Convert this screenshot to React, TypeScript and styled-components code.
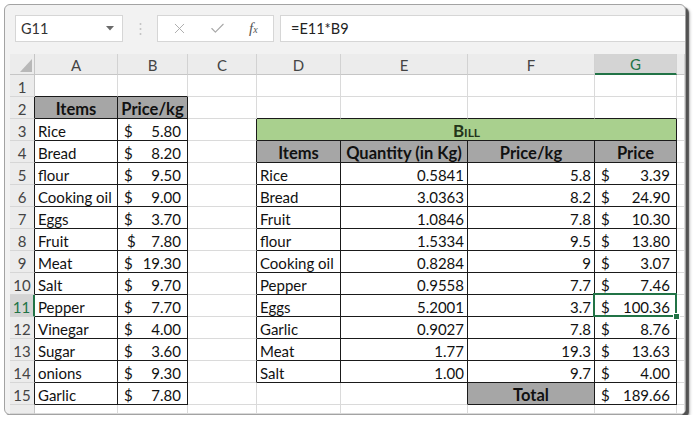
import React from 'react';
import styled, { createGlobalStyle } from 'styled-components';
import { X, Check } from 'lucide-react';

const Global = createGlobalStyle`
  html, body { margin: 0; padding: 0; background: #ffffff; }
  body { font-family: Lato, "Liberation Sans", sans-serif; }
`;

const Frame = styled.div`
  margin: 4px 0 0 4px;
  width: 682px;
  height: 411px;
  box-sizing: border-box;
  border: 1px solid #a3a3a3;
  border-radius: 6px;
  background: #f2f2f2;
  box-shadow: 3px 3px 1px rgba(70, 70, 70, 0.9), 4px 4px 3px rgba(0, 0, 0, 0.25);
  overflow: hidden;
  display: flex;
  flex-direction: column;
  padding: 10px 0 0 5px;
`;

const FormulaBar = styled.div`
  display: flex;
  align-items: stretch;
  height: 27px;
  margin-left: 5px;
  margin-bottom: 12px;
`;

const NameBox = styled.div`
  width: 108px;
  box-sizing: border-box;
  background: #fff;
  border: 1px solid #d6d6d6;
  display: flex;
  align-items: center;
  justify-content: space-between;
  padding: 0 8px 0 5px;
  font-size: 14.5px;
  color: #333;
`;

const Separator = styled.div`
  width: 34px;
  display: flex;
  align-items: center;
  justify-content: center;
`;

const FnBox = styled.div`
  width: 117px;
  box-sizing: border-box;
  background: #fff;
  border: 1px solid #d6d6d6;
  display: flex;
  align-items: center;
  padding: 0 0 0 13px;
  gap: 21px;
  color: #a8a8a8;
`;

const Fx = styled.span`
  font-family: "Liberation Serif", serif;
  font-style: italic;
  font-size: 15px;
  color: #555;
  margin-left: 2px;
  sub { font-size: 10px; vertical-align: 0; }
`;

const FormulaInput = styled.div`
  flex: 1;
  margin-left: 6px;
  box-sizing: border-box;
  background: #fff;
  border: 1px solid #d6d6d6;
  border-right: none;
  display: flex;
  align-items: center;
  padding-left: 10px;
  font-size: 14.5px;
  color: #222;
`;

const Sheet = styled.div`
  flex: 1;
  display: grid;
  grid-template-columns: 25px 83px 70px 69px 84px 127px 127px 82px 1fr;
  grid-template-rows: 21px repeat(15, 22px) 1fr;
  background: #fff;
`;

const Corner = styled.div`
  background: #ececec;
  border-right: 1px solid #c6c6c6;
  border-bottom: 1px solid #c6c6c6;
  box-sizing: border-box;
  display: flex;
  align-items: flex-end;
  justify-content: flex-end;
  padding: 0 2px 2px 0;
`;

const ColHeader = styled.div<{ $active?: boolean }>`
  box-sizing: border-box;
  background: ${(p) => (p.$active ? '#d4d4d4' : '#ececec')};
  border-right: 1px solid #d2d2d2;
  border-bottom: ${(p) => (p.$active ? '2px solid #217346' : '1px solid #c6c6c6')};
  color: ${(p) => (p.$active ? '#217346' : '#444')};
  font-size: 15px;
  display: flex;
  align-items: center;
  justify-content: center;
  padding-top: 1px;
`;

const RowHeader = styled.div<{ $active?: boolean; $rb?: boolean }>`
  box-sizing: border-box;
  background: ${(p) => (p.$active ? '#d4d4d4' : '#ececec')};
  border-right: ${(p) =>
    p.$active ? '2px solid #217346' : p.$rb ? '1px solid #1a1a1a' : '1px solid #c6c6c6'};
  border-bottom: 1px solid #d6d6d6;
  color: ${(p) => (p.$active ? '#217346' : '#444')};
  font-size: 15px;
  display: flex;
  align-items: flex-end;
  justify-content: center;
  line-height: 18px;
`;

type Align = 'left' | 'right' | 'center' | 'split';

const Cell = styled.div<{
  $rb: boolean;
  $bb: boolean;
  $bg?: string;
  $align: Align;
  $bold?: boolean;
  $span?: number;
  $selected?: boolean;
  $title?: boolean;
  $pl?: number;
}>`
  box-sizing: border-box;
  position: relative;
  grid-column: span ${(p) => p.$span ?? 1};
  border-right: 1px solid ${(p) => (p.$rb ? '#1a1a1a' : '#dadada')};
  border-bottom: 1px solid ${(p) => (p.$bb ? '#1a1a1a' : '#dadada')};
  background: ${(p) => p.$bg ?? '#fff'};
  display: flex;
  align-items: flex-end;
  justify-content: ${(p) =>
    p.$align === 'left'
      ? 'flex-start'
      : p.$align === 'right'
      ? 'flex-end'
      : p.$align === 'center'
      ? 'center'
      : 'space-between'};
  padding: 0 ${(p) => (p.$align === 'split' ? 6 : 3)}px 0 ${(p) => p.$pl ?? (p.$align === 'split' ? 6 : 3)}px;
  font-size: ${(p) => (p.$title ? 17 : p.$bold ? 16.5 : 15)}px;
  font-weight: ${(p) => (p.$bold ? 700 : 400)};
  font-variant: ${(p) => (p.$title ? 'small-caps' : 'normal')};
  color: ${(p) => (p.$title ? '#24351a' : '#111')};
  line-height: 18px;
  white-space: nowrap;
  overflow: visible;
  z-index: ${(p) => (p.$selected ? 2 : 'auto')};
  &::after {
    content: ${(p) => (p.$selected ? "''" : 'none')};
    position: absolute;
    left: -2px;
    top: -2px;
    right: -1px;
    bottom: -1px;
    border: 2px solid #217346;
  }
  &::before {
    content: ${(p) => (p.$selected ? "''" : 'none')};
    position: absolute;
    right: -4px;
    bottom: -4px;
    width: 5px;
    height: 5px;
    background: #217346;
    border: 1px solid #fff;
    z-index: 3;
  }
`;

type Kind = 'text' | 'num' | 'acct' | 'hdr' | 'title';
interface CellData {
  kind: Kind;
  text: string;
  span?: number;
  pl?: number;
}

const GRAY = '#a6a6a6';
const GREEN = '#a9d08e';

const sheet: Record<string, CellData> = {};
const put = (r: number, c: number, d: CellData) => {
  sheet[`${r}:${c}`] = d;
};

put(2, 0, { kind: 'hdr', text: 'Items' });
put(2, 1, { kind: 'hdr', text: 'Price/kg' });
const leftItems: [string, string][] = [
  ['Rice', '5.80'],
  ['Bread', '8.20'],
  ['flour', '9.50'],
  ['Cooking oil', '9.00'],
  ['Eggs', '3.70'],
  ['Fruit', '7.80'],
  ['Meat', '19.30'],
  ['Salt', '9.70'],
  ['Pepper', '7.70'],
  ['Vinegar', '4.00'],
  ['Sugar', '3.60'],
  ['onions', '9.30'],
  ['Garlic', '7.80'],
];
leftItems.forEach(([n, v], i) => {
  put(3 + i, 0, { kind: 'text', text: n });
  put(3 + i, 1, { kind: 'acct', text: v, pl: n === 'Fruit' ? 9 : undefined });
});

put(3, 3, { kind: 'title', text: 'Bill', span: 4 });
put(4, 3, { kind: 'hdr', text: 'Items' });
put(4, 4, { kind: 'hdr', text: 'Quantity (in Kg)' });
put(4, 5, { kind: 'hdr', text: 'Price/kg' });
put(4, 6, { kind: 'hdr', text: 'Price' });
const bill: [string, string, string, string][] = [
  ['Rice', '0.5841', '5.8', '3.39'],
  ['Bread', '3.0363', '8.2', '24.90'],
  ['Fruit', '1.0846', '7.8', '10.30'],
  ['flour', '1.5334', '9.5', '13.80'],
  ['Cooking oil', '0.8284', '9', '3.07'],
  ['Pepper', '0.9558', '7.7', '7.46'],
  ['Eggs', '5.2001', '3.7', '100.36'],
  ['Garlic', '0.9027', '7.8', '8.76'],
  ['Meat', '1.77', '19.3', '13.63'],
  ['Salt', '1.00', '9.7', '4.00'],
];
bill.forEach(([n, q, p, t], i) => {
  put(5 + i, 3, { kind: 'text', text: n });
  put(5 + i, 4, { kind: 'num', text: q });
  put(5 + i, 5, { kind: 'num', text: p });
  put(5 + i, 6, { kind: 'acct', text: t });
});
put(15, 5, { kind: 'hdr', text: 'Total' });
put(15, 6, { kind: 'acct', text: '189.66' });

const tables = [
  { r0: 2, r1: 15, c0: 0, c1: 1 },
  { r0: 3, r1: 14, c0: 3, c1: 6 },
  { r0: 15, r1: 15, c0: 5, c1: 6 },
];
const rightBlack = (r: number, c: number) =>
  tables.some((t) => r >= t.r0 && r <= t.r1 && ((c >= t.c0 && c <= t.c1) || c === t.c0 - 1));
const bottomBlack = (r: number, c: number) =>
  tables.some((t) => c >= t.c0 && c <= t.c1 && ((r >= t.r0 && r <= t.r1) || r === t.r0 - 1));

const COLS = ['A', 'B', 'C', 'D', 'E', 'F', 'G'];
const ACTIVE_ROW = 11;
const ACTIVE_COL = 6;

function renderCell(r: number, c: number) {
  const d = sheet[`${r}:${c}`];
  const span = d?.span ?? 1;
  const lastC = c + span - 1;
  const common = {
    key: `${r}-${c}`,
    $rb: rightBlack(r, lastC),
    $bb: bottomBlack(r, c),
    $span: span,
    $selected: r === ACTIVE_ROW && c === ACTIVE_COL,
  };
  if (!d) return <Cell {...common} $align="left" />;
  switch (d.kind) {
    case 'hdr':
      return (
        <Cell {...common} $align="center" $bold $bg={GRAY}>
          {d.text}
        </Cell>
      );
    case 'title':
      return (
        <Cell {...common} $align="center" $bold $title $bg={GREEN}>
          {d.text}
        </Cell>
      );
    case 'num':
      return (
        <Cell {...common} $align="right">
          {d.text}
        </Cell>
      );
    case 'acct':
      return (
        <Cell {...common} $align="split" $pl={d.pl}>
          <span>$</span>
          <span>{d.text}</span>
        </Cell>
      );
    default:
      return (
        <Cell {...common} $align="left">
          {d.text}
        </Cell>
      );
  }
}

function rows() {
  const out: React.ReactNode[] = [];
  for (let r = 1; r <= 16; r++) {
    out.push(
      <RowHeader key={`h${r}`} $active={r === ACTIVE_ROW} $rb={rightBlack(r, -1)}>
        {r <= 15 ? r : ''}
      </RowHeader>
    );
    for (let c = 0; c <= 7; c++) {
      const covered = Object.entries(sheet).some(([k, v]) => {
        const [rr, cc] = k.split(':').map(Number);
        return rr === r && v.span && c > cc && c < cc + v.span;
      });
      if (covered) continue;
      out.push(renderCell(r, c));
    }
  }
  return out;
}

export default function App() {
  return (
    <>
      <Global />
      <Frame>
        <FormulaBar>
          <NameBox>
            <span>G11</span>
            <svg width="8" height="5" viewBox="0 0 8 5">
              <polygon points="0,0 8,0 4,4.5" fill="#6a6a6a" />
            </svg>
          </NameBox>
          <Separator>
            <svg width="3" height="14" viewBox="0 0 3 14">
              <circle cx="1.5" cy="2" r="1" fill="#c2c2c2" />
              <circle cx="1.5" cy="7" r="1" fill="#c2c2c2" />
              <circle cx="1.5" cy="12" r="1" fill="#c2c2c2" />
            </svg>
          </Separator>
          <FnBox>
            <X size={17} strokeWidth={1.3} />
            <Check size={17} strokeWidth={1.6} />
            <Fx>
              f<sub>x</sub>
            </Fx>
          </FnBox>
          <FormulaInput>=E11*B9</FormulaInput>
        </FormulaBar>
        <Sheet>
          <Corner>
            <svg width="12" height="13" viewBox="0 0 12 13">
              <polygon points="12,0 12,13 0,13" fill="#b8b8b8" />
            </svg>
          </Corner>
          {COLS.map((c, i) => (
            <ColHeader key={c} $active={i === ACTIVE_COL}>
              {c}
            </ColHeader>
          ))}
          <ColHeader />
          {rows()}
        </Sheet>
      </Frame>
    </>
  );
}
